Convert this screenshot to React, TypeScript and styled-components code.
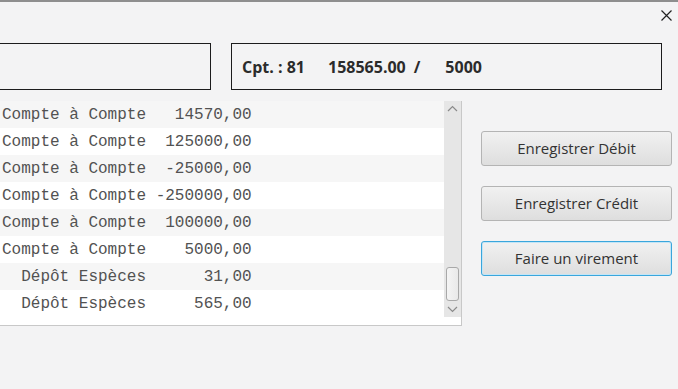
import React from "react";
import styled, { createGlobalStyle } from "styled-components";

const operations = [
  { label: "Compte à Compte", amount: "14570,00" },
  { label: "Compte à Compte", amount: "125000,00" },
  { label: "Compte à Compte", amount: "-25000,00" },
  { label: "Compte à Compte", amount: "-250000,00" },
  { label: "Compte à Compte", amount: "100000,00" },
  { label: "Compte à Compte", amount: "5000,00" },
  { label: "Dépôt Espèces", amount: "31,00" },
  { label: "Dépôt Espèces", amount: "565,00" },
];

// ligne au format fixe : libellé sur 15 colonnes, montant sur 11
const formatLine = (label: string, amount: string) =>
  label.padStart(15, " ") + amount.padStart(11, " ");

const App: React.FC = () => {
  return (
    <>
      <GlobalStyle />
      <Window>
        <TitleBar>
          <CloseButton aria-label="Fermer">
            <svg width="11" height="11" viewBox="0 0 11 11">
              <path d="M0.5 0.5 L10.5 10.5 M10.5 0.5 L0.5 10.5" stroke="#222" strokeWidth="1.2" fill="none" />
            </svg>
          </CloseButton>
        </TitleBar>

        <Content>
          {/* en-tête compte */}
          <TopRow>
            <SearchBox />
            <AccountBox>
              <AccountText>Cpt. : 81</AccountText>
              <AccountText $gap={23}>158565.00</AccountText>
              <AccountText $gap={8}>/</AccountText>
              <AccountText $gap={25}>5000</AccountText>
            </AccountBox>
          </TopRow>

          <MainRow>
            {/* liste des opérations */}
            <ListView>
              <Rows>
                {operations.map((op, inx) => (
                  <Row key={`op-${inx}`} $odd={inx % 2 === 0}>
                    {formatLine(op.label, op.amount)}
                  </Row>
                ))}
              </Rows>
              <ScrollBar>
                <Arrow>
                  <svg width="11" height="7" viewBox="0 0 11 7">
                    <path d="M1 6 L5.5 1.5 L10 6" stroke="#8a8a8a" strokeWidth="1.2" fill="none" />
                  </svg>
                </Arrow>
                <Track>
                  <Thumb />
                </Track>
                <Arrow>
                  <svg width="11" height="7" viewBox="0 0 11 7">
                    <path d="M1 1 L5.5 5.5 L10 1" stroke="#8a8a8a" strokeWidth="1.2" fill="none" />
                  </svg>
                </Arrow>
              </ScrollBar>
            </ListView>

            {/* actions */}
            <Actions>
              <ActionButton>Enregistrer Débit</ActionButton>
              <ActionButton>Enregistrer Crédit</ActionButton>
              <ActionButton $focused>Faire un virement</ActionButton>
            </Actions>
          </MainRow>
        </Content>
      </Window>
    </>
  );
};

const GlobalStyle = createGlobalStyle`
  html, body {
    margin: 0;
    padding: 0;
    background: #f3f3f4;
  }
  * {
    box-sizing: border-box;
  }
`;

const Window = styled.div`
  width: 678px;
  height: 389px;
  overflow: hidden;
  background: #f3f3f4;
  font-family: "Open Sans", "Liberation Sans", sans-serif;
`;

const TitleBar = styled.div`
  height: 30px;
  border-top: 2px solid #8e8e8e;
  display: flex;
  justify-content: flex-end;
  align-items: center;
  padding-right: 4px;
`;

const CloseButton = styled.div`
  width: 16px;
  height: 16px;
  display: flex;
  align-items: center;
  justify-content: center;
  margin-top: -2px;
`;

const Content = styled.div`
  padding-top: 13px;
`;

const TopRow = styled.div`
  display: flex;
  align-items: stretch;
  height: 47px;
`;

const SearchBox = styled.div`
  width: 211px;
  border: 1px solid #1c1c1c;
  border-left: none;
`;

const AccountBox = styled.div`
  width: 431px;
  margin-left: 20px;
  border: 1px solid #1c1c1c;
  display: flex;
  align-items: center;
  padding-left: 10px;
`;

const AccountText = styled.span<{ $gap?: number }>`
  font-size: 16px;
  font-weight: 700;
  color: #2b2b2b;
  margin-left: ${(p) => p.$gap ?? 0}px;
  white-space: pre;
`;

const MainRow = styled.div`
  display: flex;
  margin-top: 11px;
`;

const ListView = styled.div`
  width: 462px;
  height: 225px;
  display: flex;
  background: #ffffff;
  border-right: 1px solid #c8c8c8;
  border-bottom: 1px solid #c8c8c8;
`;

const Rows = styled.div`
  flex: 1 1 auto;
  display: flex;
  flex-direction: column;
`;

const Row = styled.div<{ $odd: boolean }>`
  height: 27px;
  display: flex;
  align-items: center;
  padding-left: 2px;
  background: ${(p) => (p.$odd ? "#f6f6f6" : "#ffffff")};
  font-family: "Liberation Mono", "Courier New", monospace;
  font-size: 16px;
  color: #525252;
  white-space: pre;
`;

const ScrollBar = styled.div`
  flex: 0 0 17px;
  height: 216px;
  background: #e6e6e6;
  display: flex;
  flex-direction: column;
`;

const Arrow = styled.div`
  height: 15px;
  display: flex;
  align-items: center;
  justify-content: center;
`;

const Track = styled.div`
  flex: 1 1 auto;
  display: flex;
  flex-direction: column;
  justify-content: flex-end;
  padding: 0 2px 1px 2px;
`;

const Thumb = styled.div`
  height: 34px;
  border: 1px solid #a8a8a8;
  border-radius: 3px;
  background: linear-gradient(to right, #f4f4f4, #e9e9e9);
`;

const Actions = styled.div`
  display: flex;
  flex-direction: column;
  gap: 20px;
  margin-left: 19px;
  padding-top: 30px;
`;

const ActionButton = styled.button<{ $focused?: boolean }>`
  width: 191px;
  height: 35px;
  border-radius: 3px;
  border: 1px solid ${(p) => (p.$focused ? "#3aa6dc" : "#b4b4b4")};
  box-shadow: ${(p) => (p.$focused ? "inset 0 0 0 1px #c4e5f6" : "none")};
  background: linear-gradient(to bottom, #f1f1f1, #dedede);
  font-family: "Open Sans", "Liberation Sans", sans-serif;
  font-size: 15px;
  color: #333333;
  padding: 0 0 2px 0;
`;

export default App;
